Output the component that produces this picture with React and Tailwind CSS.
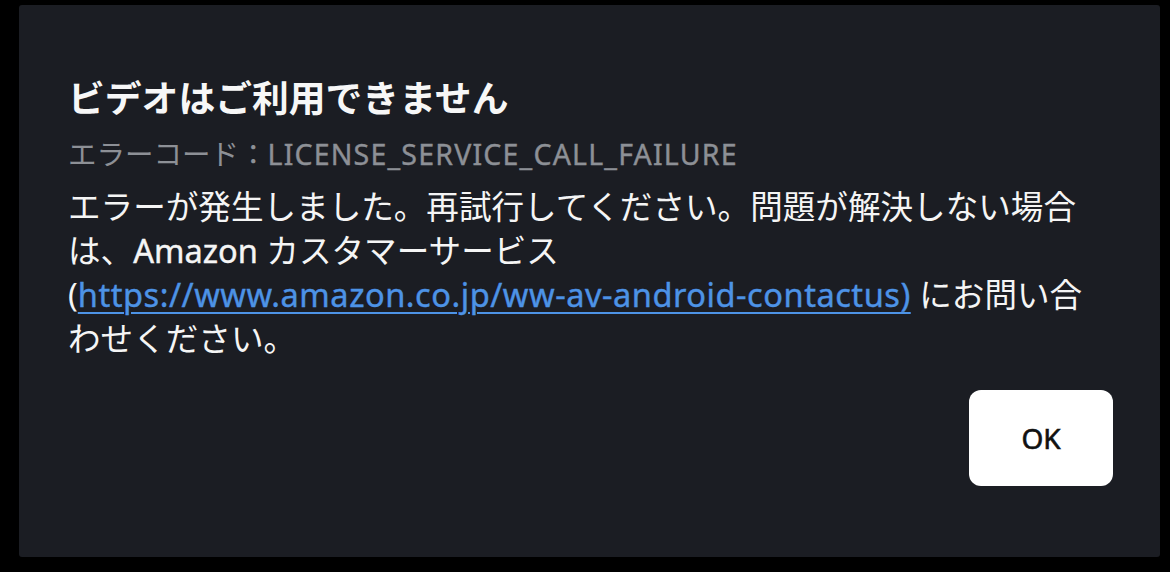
export default function App() {
  const font = { fontFamily: '"Noto Sans", "Noto Sans CJK JP", sans-serif' };
  const latin = { fontFamily: '"Noto Sans", "Open Sans", sans-serif' };
  return (
    <div className="w-[1170px] h-[572px] bg-black pl-[19px] pr-[10px] pt-[5px] pb-[15px]" style={font}>
      <div className="h-[552px] bg-[#1b1d23] rounded-[3px] pl-[49px] pr-[47px] pt-[76px] flex flex-col">
        <h1 className="text-[36.8px] leading-[44px] font-bold text-[#f7f7f7] -mt-[5px]">ビデオはご利用できません</h1>
        <p className="text-[28.5px] leading-[40px] text-[#8d9096] mt-[14px]">
          エラーコード：<span className="tracking-[0.042em] [-webkit-text-stroke:0.4px_#8d9096]" style={latin}>LICENSE_SERVICE_CALL_FAILURE</span>
        </p>
        <p className="text-[32.6px] leading-[44px] text-[#f5f5f5] mt-[11px] w-[1030px]">
          エラーが発生しました。再試行してください。問題が解決しない場合は、<span className="[-webkit-text-stroke:0.4px_#f5f5f5]" style={latin}>Amazon</span> カスタマーサービス{' '}
          <span className="whitespace-nowrap">
            (<a href="#" className="tracking-[0.016em] text-[#4d93e6] underline underline-offset-[5px] decoration-[2px] [-webkit-text-stroke:0.4px_#4d93e6]" style={latin}>https://www.amazon.co.jp/ww-av-android-contactus)</a>
          </span>{' '}
          にお問い合わせください。
        </p>
        <div className="flex justify-end mt-[29px]">
          <button className="w-[144px] h-[96px] bg-white rounded-[12px] text-[28px] font-normal text-[#111111] [-webkit-text-stroke:0.6px_#111111]" style={latin}>OK</button>
        </div>
      </div>
    </div>
  );
}
